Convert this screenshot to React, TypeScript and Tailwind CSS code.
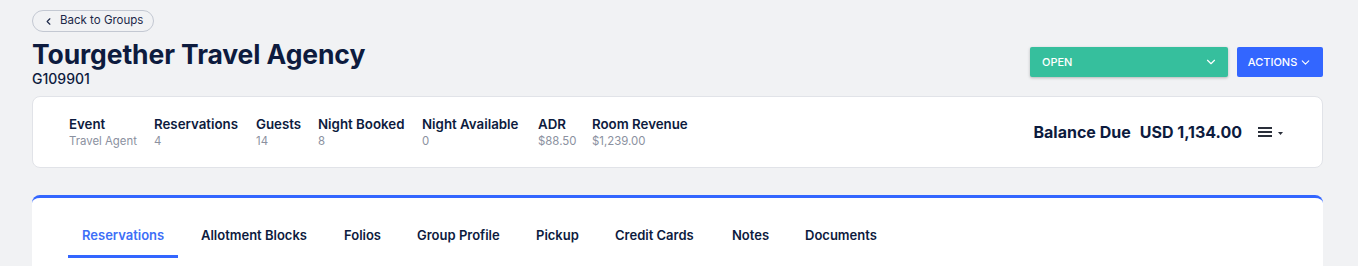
import { ChevronDown, ChevronLeft } from "lucide-react";

// column widths measured so labels line up like the source table
const stats = [
  { label: "Event", value: "Travel Agent", w: "w-[85px]" },
  { label: "Reservations", value: "4", w: "w-[102px]" },
  { label: "Guests", value: "14", w: "w-[62px]" },
  { label: "Night Booked", value: "8", w: "w-[104px]" },
  { label: "Night Available", value: "0", w: "w-[116px]" },
  { label: "ADR", value: "$88.50", w: "w-[54px]" },
  { label: "Room Revenue", value: "$1,239.00", w: "w-auto" },
];

const tabs = [
  { name: "Reservations", w: "w-[110px]" },
  { name: "Allotment Blocks", w: "w-[134px]" },
  { name: "Folios", w: "w-[64px]" },
  { name: "Group Profile", w: "w-[110px]" },
  { name: "Pickup", w: "w-[70px]" },
  { name: "Credit Cards", w: "w-[108px]" },
  { name: "Notes", w: "w-[64px]" },
  { name: "Documents", w: "w-[101px]" },
];

function MenuIcon() {
  return (
    <svg width="28" height="12" viewBox="0 0 28 12">
      <rect x="0" y="1" width="14" height="2" fill="#2a2f3a" />
      <rect x="0" y="5" width="14" height="2" fill="#2a2f3a" />
      <rect x="0" y="9" width="14" height="2" fill="#2a2f3a" />
      <path d="M20 6 L25 6 L22.5 9 Z" fill="#2a2f3a" />
    </svg>
  );
}

export default function App() {
  return (
    <div
      className="min-h-[266px] bg-[#f1f2f4] pl-8 pr-[35px] pt-[10px] text-[#0d1b3e]"
      style={{ fontFamily: "Inter, 'Noto Sans', sans-serif" }}
    >
      <button className="flex h-[22px] items-center gap-[6px] rounded-full border border-[#c3c8d2] pl-[10px] pr-[10px] text-[11.5px] text-[#1c2848]">
        <ChevronLeft size={11} strokeWidth={2.5} />
        Back to Groups
      </button>

      <div className="mt-[7px] flex items-start justify-between">
        <div>
          <h1 className="text-[26.5px] font-bold leading-[30px] tracking-[-0.1px]">
            Tourgether Travel Agency
          </h1>
          <p className="pt-[2px] text-[14px] font-medium leading-[16px]">
            G109901
          </p>
        </div>
        <div className="mt-[8px] flex items-center gap-[9px]">
          <div className="flex h-[30px] w-[198px] items-center justify-between rounded-[2px] bg-[#36bf9d] pl-3 pr-[10px] text-[11px] font-medium text-white shadow-[0_1px_3px_rgba(0,0,0,0.25)]">
            OPEN
            <ChevronDown size={14} strokeWidth={2} />
          </div>
          <button className="flex h-[30px] w-[86px] items-center justify-center gap-[2px] rounded-[2px] bg-[#3366ff] text-[11px] font-medium text-white">
            ACTIONS
            <ChevronDown size={13} strokeWidth={2} />
          </button>
        </div>
      </div>

      <div className="mt-[9px] flex h-[72px] items-center justify-between rounded-lg border border-[#e1e3e8] bg-white pl-9 pr-[36px]">
        <div className="flex">
          {stats.map((s) => (
            <div key={s.label} className={s.w}>
              <p className="whitespace-nowrap text-[13.3px] font-semibold leading-[16px] text-[#0d1b3e]">
                {s.label}
              </p>
              <p className="mt-[2px] whitespace-nowrap text-[11.4px] leading-[14px] text-[#8b91a0]">
                {s.value}
              </p>
            </div>
          ))}
        </div>
        <div className="flex items-center">
          <span className="text-[16px] font-bold">Balance Due</span>
          <span className="ml-[9px] text-[16px] font-bold">USD 1,134.00</span>
          <span className="ml-[16px] flex">
            <MenuIcon />
          </span>
        </div>
      </div>

      <div className="mt-[27px] h-[71px] rounded-t-lg border-t-[3px] border-[#3366ff] bg-white px-9 pt-[29px]">
        <div className="flex gap-[9px]">
          {tabs.map((t, i) => (
            <div
              key={t.name}
              className={
                i === 0
                  ? `${t.w} whitespace-nowrap border-b-[3px] border-[#3366ff] pl-[14px] pb-[12px] text-[13px] font-semibold leading-[16px] text-[#3d6ef7]`
                  : `${t.w} whitespace-nowrap border-b-[3px] border-transparent pl-[14px] pb-[12px] text-[13px] font-semibold leading-[16px] text-[#0d1b3e]`
              }
            >
              {t.name}
            </div>
          ))}
        </div>
      </div>
    </div>
  );
}
